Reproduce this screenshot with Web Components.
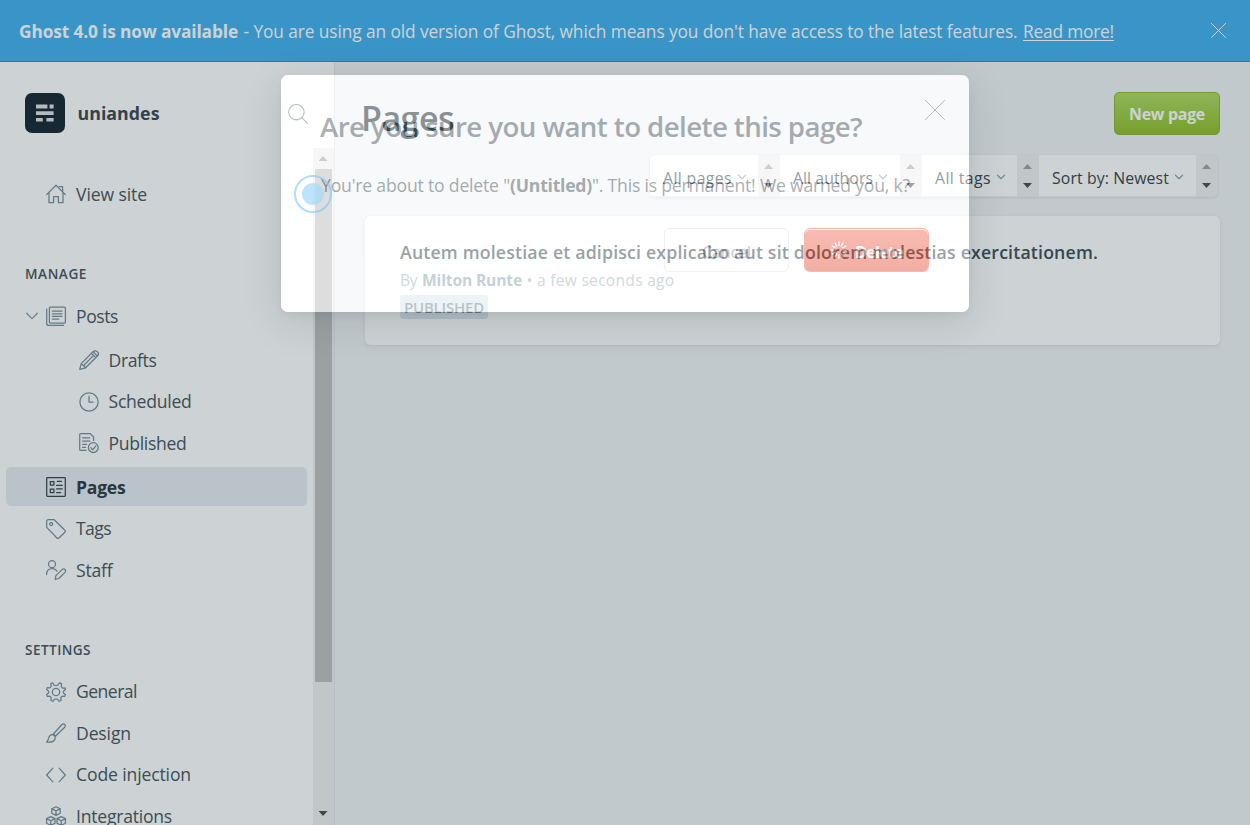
<!DOCTYPE html>
<html lang="en">
<head>
<meta charset="utf-8">
<title>Pages</title>
<style>
html,body{margin:0;height:100%;overflow:hidden}
body{font-family:"Open Sans","Noto Sans",sans-serif;color:#3b484f}
</style>
</head>
<body>
<gh-app></gh-app>
<script>
const define=(name,html,setup)=>customElements.define(name,class extends HTMLElement{
  connectedCallback(){
    if(this.shadowRoot)return;
    const t=document.createElement('template');
    t.innerHTML=typeof html==='function'?html(this):html;
    this.attachShadow({mode:'open'}).append(t.content.cloneNode(true));
    if(setup)setup(this);
  }
});

/* A single line of text, tracked so that it takes the given width. */
define('gh-text','<style>:host{display:inline-block;white-space:pre;flex:none}span{display:inline-block;white-space:pre}:host([underline]) span{text-decoration:underline;text-decoration-thickness:1px;text-underline-offset:2px}</style><span><slot></slot></span>',el=>{
  const w=+el.getAttribute('w'),s=el.shadowRoot.querySelector('span');
  const n=el.textContent.length;
  if(w&&n){
    s.style.letterSpacing=((w-s.getBoundingClientRect().width)/n).toFixed(4)+'px';
  }
});

const icons={
  house:'<path d="M.6 10.6 10 1.2l9.4 9.4M3 8.6v10h4.6v-6h4.8v6H17v-10M13.4 2.6h3.2v4.8"/>',
  posts:'<path d="M4.4 1h14a1 1 0 0 1 1 1v14a1 1 0 0 1-1 1h-14a1 1 0 0 1-1-1V2a1 1 0 0 1 1-1zM.7 3v14.4a2 2 0 0 0 2 2h14.8M6.4 5h9.6M6.4 7.8h9.6M6.4 10.4h9.6M6.4 13h6.4"/>',
  pencil:'<path d="M.7 19.3 2.2 13.6 14 1.7a2.7 2.7 0 0 1 4.4 4.3L6.6 17.8zM2.2 13.6l4.4 4.2M12.4 3.3l4.4 4.3M14.1 1.8l4.3 4.3M4.4 15.7 14.6 5.4"/>',
  clock:'<circle cx="10" cy="10" r="9.1"/><path d="M10 4.2V10h4.2"/>',
  published:'<path d="M7 17.4H1.7a1 1 0 0 1-1-1V1.6a1 1 0 0 1 1-1h9.6L14.6 4v3.4M3.6 4.8h7.2M3.6 8.2h7.2M3.6 11.4h4M3.6 14.4h2.8M11.8 14.6l1.9 2.2 3.2-3.9"/><circle cx="14.3" cy="14.6" r="4.9"/>',
  pages:'<rect x=".7" y=".7" width="18.6" height="18.6" rx=".8"/><path d="M4.3 4.5h3.6V8H4.3zM4.3 12h3.6v3.6H4.3zM11.4 4.4h4M10.6 8.3h5.6M10.6 11.8h5.6M10.6 15.5h4"/>',
  tag:'<path d="M.7 2.1A1.4 1.4 0 0 1 2.1.7h6.1l10.7 10.5a1.4 1.4 0 0 1 0 2l-6 5.8a1.4 1.4 0 0 1-2 0L.7 8.4z"/><circle cx="5.2" cy="5.1" r="1.5"/>',
  staff:'<circle cx="6" cy="4.2" r="3.5"/><path d="M.6 14.6C.6 10.8 3 8.6 6.2 8.6c2.1 0 3.8.8 4.8 2.6M9.2 19.4l.7-3.8 6.2-6a2 2 0 0 1 2.9 2.8l-6.2 6.1z"/>',
  gear:'<circle cx="10" cy="10" r="3.7"/><path d="M8.1 3.2 10 3.5 11.9 3.2 13.3.8 15.6 1.7 15.2 4.6 16.7 6.2 19.3 6 19.4 7.6 17.4 9.2V10.9L19.4 12.5 18.8 14.4 16.2 14.1 14.7 15.6 15.2 18.3 13.2 19.3 11.4 17.2H8.6L6.8 19.3 4.8 18.3 5.3 15.6 3.8 14.1 1.2 14.4.6 12.5 2.6 10.9V9.2L.6 7.6 1.2 5.6 3.8 5.9 5.2 4.4 4.8 1.7 6.7.8z"/>',
  brush:'<path d="M7.4 11 15.9 1.5a1.9 1.9 0 0 1 2.8 2.7L9.6 13M7.2 10.8l2.5 2.4M6.6 11.4c-2 .2-3.4 1.4-3.8 3.5-.2 1.7-.9 2.7-2.2 4.2 3.3.3 7.6-.2 8.4-3.1.4-1.4.1-2.4-.4-3.1z"/>',
  code:'<path d="M6.8 3.2.7 10l6.1 6.8M13.2 3.2l6.1 6.8-6.1 6.8"/>',
  blocks:'<path d="m10 .7 4.2 2v4.6L10 9.4 5.8 7.3V2.7zM5.8 2.7 10 4.9l4.2-2.2M10 4.9v4.5"/><path d="m4.8 10.6 4.2 2v4.6l-4.2 2.1-4.2-2.1v-4.6zM.6 12.6l4.2 2.2L9 12.6M4.8 14.8v4.5M15.2 10.6l4.2 2v4.6l-4.2 2.1-4.2-2.1v-4.6zM11 12.6l4.2 2.2 4.2-2.2M15.2 14.8v4.5"/>',
  search:'<circle cx="8.4" cy="8.2" r="7.7"/><path d="m13.9 13.7 5.6 5.7"/>',
  close:'<path d="m.5.5 19 19M19.5.5l-19 19"/>',
  down:'<path d="m1 5.4 9 9 9-9"/>'
};
define('gh-icon',el=>{
  const s=el.getAttribute('size')||20;
  return `<style>:host{display:block;flex:none;width:${s}px;height:${s}px}svg{display:block;overflow:visible}</style><svg width="${s}" height="${s}" viewBox="0 0 20 20" fill="none" stroke="currentColor" stroke-linejoin="round" stroke-linecap="round" stroke-width="${el.getAttribute('stroke')||1.25}">${icons[el.getAttribute('name')]}</svg>`;
});

define('gh-banner',`<style>
:host{display:flex;box-sizing:border-box;height:62px;padding:0 24px 0 19px;align-items:center;background:#47b3f1;border-bottom:1px solid #1d9ae2;color:#fff;font-size:17.3px}
p{margin:0;flex:1;display:flex;gap:5.5px;padding-top:2px}b{font-weight:700}
</style><p><b><gh-text w="219">Ghost 4.0 is now available</gh-text></b><gh-text w="774">- You are using an old version of Ghost, which means you don't have access to the latest features.</gh-text><gh-text underline w="91">Read more!</gh-text></p><gh-icon name="close" size="15" stroke="1.3"></gh-icon>`);

define('gh-nav-item',el=>`<style>
:host{display:flex;position:relative;height:39px;margin:0 27px 2.5px 6px;padding-left:40px;align-items:center;gap:10px;font-size:17.6px;color:#4b5961}
:host([sub]){padding-left:73px}
:host([active]){border-radius:5px;font-weight:700;color:#323e46;background:#e8ecf3}
gh-icon{color:#7b929d;margin-top:1px}
:host([active]) gh-icon{color:#3a464e}
:host([sub]) gh-text{margin-left:-.5px}
.arrow{position:absolute;left:20px;top:13px}
</style>${el.hasAttribute('open')?'<gh-icon class="arrow" name="down" size="12" stroke="1.9"></gh-icon>':''}<gh-icon name="${el.getAttribute('icon')}"></gh-icon><gh-text w="${el.getAttribute('w')}">${el.textContent}</gh-text>`);

define('gh-scrollbar',`<style>
:host{display:flex;flex-direction:column;align-items:center;box-sizing:border-box;width:21px;background:#f1f1f1;padding:8px 0 9px}
i{width:9px;height:5px;margin-right:1px;background:#a3a3a3;clip-path:polygon(50% 0,100% 100%,0 100%)}
div{width:17px;height:513px;background:#c1c1c1;margin-top:8px}
i:last-child{margin-top:auto;background:#505050;clip-path:polygon(0 0,100% 0,50% 100%)}
</style><i></i><div></div><i></i>`);

define('gh-sidebar',`<style>
:host{display:flex;position:relative;flex-direction:column;box-sizing:border-box;width:335px;flex:none;background:#fff;border-right:1px solid #e3e8ee}
header{display:flex;height:40px;padding:31px 26px 0 25px;align-items:center}
.logo{width:40px;height:40px;border-radius:7px;background:#1c2b35;margin-right:12.5px;display:grid;place-items:center}
header gh-text{font-size:17.8px;font-weight:700;color:#3f4c53}
header gh-icon{margin-left:auto;color:#738a94;margin-top:2px}
nav{display:flex;flex-direction:column;margin-top:41px}
h2{margin:0;font-size:13.6px;font-weight:600;line-height:20px;color:#4a5962;padding-left:25px}
.sec{margin-top:48.5px;margin-bottom:12px}.sec2{margin-top:48px;margin-bottom:12px}
.subs{display:flex;flex-direction:column;margin:2.5px 0 2.5px}
gh-scrollbar{position:absolute;right:0;top:86px;bottom:0}
</style><header><div class="logo"><svg width="20" height="20" viewBox="0 0 20 20" fill="#dfe3e5"><path d="M1 1.6h11.4v3.8H1zM14.6 1.6h4v3.8h-4zM1 8.3h17.6V12H1zM1 15h6.8v3.6H1zM11.4 15h7.2v3.6h-7.2z"/></svg></div><gh-text w="82">uniandes</gh-text><gh-icon name="search" stroke="1.1"></gh-icon></header>
<nav><gh-nav-item icon="house" w="71">View site</gh-nav-item>
<h2 class="sec"><gh-text w="62">MANAGE</gh-text></h2>
<gh-nav-item icon="posts" open w="42">Posts</gh-nav-item>
<div class="subs"><gh-nav-item sub icon="pencil" w="48">Drafts</gh-nav-item><gh-nav-item sub icon="clock" w="83">Scheduled</gh-nav-item><gh-nav-item sub icon="published" w="78">Published</gh-nav-item></div>
<gh-nav-item active icon="pages" w="49.5">Pages</gh-nav-item><gh-nav-item icon="tag" w="35">Tags</gh-nav-item><gh-nav-item icon="staff" w="36.5">Staff</gh-nav-item>
<h2 class="sec2"><gh-text w="66">SETTINGS</gh-text></h2>
<gh-nav-item icon="gear" w="61">General</gh-nav-item><gh-nav-item icon="brush" w="55">Design</gh-nav-item><gh-nav-item icon="code" w="115">Code injection</gh-nav-item><gh-nav-item icon="blocks" w="96">Integrations</gh-nav-item></nav>
<gh-scrollbar></gh-scrollbar>`);

define('gh-filter',el=>`<style>
:host{display:flex;height:42px;width:${el.getAttribute('width')}px}
.v{flex:1;display:flex;align-items:center;gap:6px;background:#fff;padding-left:13px;font-size:15.8px;color:#3b484f;border-bottom:1px solid #f1f1f1;box-sizing:border-box}
.v gh-text{margin-top:4px}.v gh-icon{margin-top:3px;color:#8a9ba4}
.s{width:22px;display:flex;flex-direction:column;align-items:center;justify-content:center;gap:14px;background:#f1f1f1}
.s i{width:9px;height:5px;margin-right:1px;background:#a3a3a3;clip-path:polygon(50% 0,100% 100%,0 100%)}
.s i+i{background:#505050;clip-path:polygon(0 0,100% 0,50% 100%)}
</style><div class="v"><gh-text w="${el.getAttribute('w')}">${el.textContent}</gh-text><gh-icon name="down" size="8" stroke="2.8"></gh-icon></div><div class="s"><i></i><i></i></div>`);

define('gh-post-card',`<style>
:host{display:flex;flex-direction:column;align-items:flex-start;box-sizing:border-box;height:129px;padding:23px 35px 0;background:#fff;border-radius:5px;box-shadow:0 0 1px rgba(0,0,0,.12),0 2px 4px rgba(40,60,70,.08)}
h3{margin:0;font-size:17.7px;line-height:26px;font-weight:600;color:#43525a}
p{margin:3px 0 0;display:flex;font-size:15.6px;line-height:24px;color:#a9b9c1}
b{font-weight:700;color:#96a9b3;margin:0 4.5px 0 5px}
.tag{margin-top:3px;height:24px;border-radius:3px;background:#dfe9ef;padding:0 4px;font-size:15px;line-height:25px;font-weight:600;color:#7a929e}
</style><h3><gh-text w="698">Autem molestiae et adipisci explicabo aut sit dolorem molestias exercitationem.</gh-text></h3>
<p><gh-text w="17">By</gh-text><b><gh-text w="100">Milton Runte</gh-text></b><gh-text w="148">• a few seconds ago</gh-text></p><span class="tag"><gh-text w="80">PUBLISHED</gh-text></span>`);

define('gh-main',`<style>
:host{display:flex;flex:1;flex-direction:column;box-sizing:border-box;padding:30px 30px 0;background:#f1f4f6}
header{display:flex;justify-content:space-between;align-items:flex-start;height:63px}
h1{margin:0 0 0 -4px;font-size:34px;line-height:53px;font-weight:600;color:#25333c}
button{all:unset;box-sizing:border-box;width:106px;height:43px;border-radius:5px;border:1px solid #8eb73a;background:linear-gradient(#b0dc63,#93c02f);color:#fff;font-weight:700;font-size:15.9px;text-align:center;line-height:43px}
.filters{display:flex;justify-content:flex-end;margin:0 2px 19px 0}
.group{display:flex;border-radius:5px;overflow:hidden;box-shadow:0 0 1px rgba(0,0,0,.15),0 1px 3px rgba(0,0,0,.08)}
</style><header><h1><gh-text w="93">Pages</gh-text></h1><button><gh-text w="76">New page</gh-text></button></header>
<div class="filters"><div class="group"><gh-filter width="130" w="69">All pages</gh-filter><gh-filter width="142" w="80">All authors</gh-filter><gh-filter width="117" w="56">All tags</gh-filter><gh-filter width="179" w="117">Sort by: Newest</gh-filter></div></div><gh-post-card></gh-post-card>`);

/* The backdrop is the spread shadow of the dialog, so it stays clear of the fading panel. */
define('gh-dialog',`<style>
:host{position:absolute;left:281px;top:75px;width:688px;height:237px;border-radius:7px;box-shadow:0 10px 40px rgba(30,40,40,.13),0 3px 8px rgba(0,0,0,.05),0 0 0 2000px rgba(5,30,40,.2)}
section{box-sizing:border-box;height:100%;border-radius:7px;background:#fff;opacity:.46;padding:32px 40px 40px 39px;display:flex;flex-direction:column;position:relative;color:#2d3840}
h1{margin:0;font-size:27.7px;line-height:38px;font-weight:600;color:#4a565e}
p{margin:27px 0 0;font-size:17.6px;line-height:26px;color:#4a545b;display:flex;padding-left:1px}
b{font-weight:700}
gh-icon{position:absolute;right:24px;top:25px;color:#777}
footer{display:flex;justify-content:flex-end;gap:15px;margin-top:30px}
button{all:unset;box-sizing:border-box;width:125px;height:44px;border-radius:6px;border:1px solid #dcdfe2;display:flex;align-items:center;justify-content:center;font-size:16px;color:#7d919c}
button gh-text{margin-top:3px}
.del{border:1px solid #f0644c;background:linear-gradient(#f16c58,#e5503a);box-shadow:inset 0 1px 0 #fff;color:#fff;font-weight:700;gap:7px}
</style><section><gh-icon name="close" size="20" stroke="1"></gh-icon><h1><gh-text w="542">Are you sure you want to delete this page?</gh-text></h1>
<p><gh-text w="189">You're about to delete "</gh-text><b><gh-text w="82">(Untitled)</gh-text></b><gh-text w="318">". This is permanent! We warned you, k?</gh-text></p>
<footer><button><gh-text w="49">Cancel</gh-text></button><button class="del"><svg width="18" height="18" viewBox="-9 -9 18 18" stroke="#fff" stroke-width="1.3" stroke-linecap="round"><path d="M0-4.5V-8M2.3-3.9 4-6.9M3.9-2.3 6.9-4M4.5 0H8M3.9 2.3l3 1.7M2.3 3.9l1.7 3M0 4.5V8M-2.3 3.9l-1.7 3M-3.9 2.3l-3 1.7M-4.5 0H-8M-3.9-2.3l-3-1.7M-2.3-3.9l-1.7-3"/></svg><gh-text w="48">Delete</gh-text></button></footer></section>`);

define('gh-pointer',`<style>
:host{position:absolute;left:293.5px;top:175px;box-sizing:border-box;width:38px;height:38px;border-radius:50%;border:2px solid rgba(120,200,245,.6);display:grid;place-items:center}
i{width:22px;height:22px;border-radius:50%;background:rgba(165,218,250,.72)}
</style><i></i>`);

define('gh-app',`<style>
:host{display:flex;position:relative;flex-direction:column;height:825px;width:1250px;overflow:hidden}
main{display:flex;flex:1;min-height:0}
</style><gh-banner></gh-banner><main><gh-sidebar></gh-sidebar><gh-main></gh-main></main><gh-dialog></gh-dialog><gh-pointer></gh-pointer>`);
</script>
</body>
</html>
